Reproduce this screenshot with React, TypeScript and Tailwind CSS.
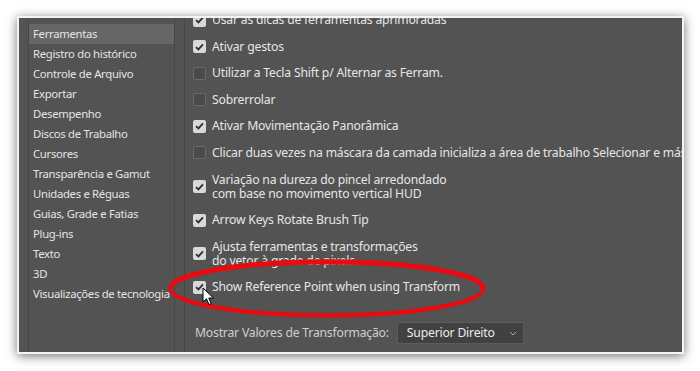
import React from 'react';

const CATEGORIES = [
  'Ferramentas',
  'Registro do histórico',
  'Controle de Arquivo',
  'Exportar',
  'Desempenho',
  'Discos de Trabalho',
  'Cursores',
  'Transparência e Gamut',
  'Unidades e Réguas',
  'Guias, Grade e Fatias',
  'Plug-ins',
  'Texto',
  '3D',
  'Visualizações de tecnologia',
];

type Option = { lines: string[]; checked: boolean };

const OPTIONS: Option[] = [
  { lines: ['Usar as dicas de ferramentas aprimoradas'], checked: true },
  { lines: ['Ativar gestos'], checked: true },
  { lines: ['Utilizar a Tecla Shift p/ Alternar as Ferram.'], checked: false },
  { lines: ['Sobrerrolar'], checked: false },
  { lines: ['Ativar Movimentação Panorâmica'], checked: true },
  {
    lines: ['Clicar duas vezes na máscara da camada inicializa a área de trabalho Selecionar e máscara'],
    checked: false,
  },
  {
    lines: ['Variação na dureza do pincel arredondado', 'com base no movimento vertical HUD'],
    checked: true,
  },
  { lines: ['Arrow Keys Rotate Brush Tip'], checked: true },
  { lines: ['Ajusta ferramentas e transformações', 'do vetor à grade de pixels'], checked: true },
  { lines: ['Show Reference Point when using Transform'], checked: true },
];

const Checkbox = ({ checked }: { checked: boolean }) =>
  checked ? (
    <span className="flex h-[13px] w-[13px] shrink-0 items-center justify-center rounded-[2px] bg-[#d9d9d9]">
      <svg width="9" height="8" viewBox="0 0 9 8">
        <path d="M1 4.2 L3.4 6.4 L8 1.4" fill="none" stroke="#2e2e2e" strokeWidth="1.8" />
      </svg>
    </span>
  ) : (
    <span className="h-[13px] w-[13px] shrink-0 rounded-[2px] border border-[#6a6a6a] bg-[#4a4a4a]" />
  );

export default function App() {
  return (
    <div className="h-[371px] w-[700px] overflow-hidden bg-white pl-[17px] pt-[16px] font-['Noto_Sans',sans-serif]">
      <div className="relative flex h-[338px] w-[667px] overflow-hidden border-2 border-[#f4f4f4] bg-[#535353] shadow-[0_2px_10px_rgba(0,0,0,0.55)]">
        {/* lista de categorias */}
        <div className="ml-[9px] w-[147px] shrink-0 border-x border-[#474747] pt-[6px]">
          {CATEGORIES.map((c, i) => (
            <div
              key={c}
              className={`flex h-[20px] items-center pl-[4px] text-[11.3px] tracking-[-0.3px] whitespace-nowrap text-[#e4e4e4] ${
                i === 0 ? 'bg-[#666666]' : ''
              }`}
            >
              {c}
            </div>
          ))}
        </div>

        {/* painel de opções */}
        <div className="ml-[9px] flex min-w-0 flex-1 flex-col border-l border-[#474747] pl-[8px]">
          <div className="-mt-[5px] flex flex-col gap-[12.6px]">
            {OPTIONS.map((o, i) => (
              <div key={i} className="flex items-center gap-[6px]">
                <Checkbox checked={o.checked} />
                <div className="text-[12.2px] leading-[14px] tracking-[-0.2px] whitespace-nowrap text-[#e6e6e6]">
                  {o.lines.map((l) => (
                    <div key={l}>{l}</div>
                  ))}
                </div>
              </div>
            ))}
          </div>

          <div className="mt-[28px] flex items-center gap-[8px] pl-[2px]">
            <span className="text-[12.2px] tracking-[-0.2px] text-[#cfcfcf]">Mostrar Valores de Transformação:</span>
            <div className="flex h-[22px] w-[127px] items-center justify-between border border-[#5c5c5c] bg-[#414141] pl-[9px] pr-[6px] text-[12.2px] tracking-[-0.2px] text-[#ececec]">
              <span>Superior Direito</span>
              <svg width="8" height="5" viewBox="0 0 8 5">
                <path d="M1 1 L4 4 L7 1" fill="none" stroke="#a8a8a8" strokeWidth="1" />
              </svg>
            </div>
          </div>
        </div>

        {/* marcação vermelha */}
        <svg className="pointer-events-none absolute left-0 top-0" width="667" height="338" viewBox="0 0 667 338">
          <ellipse cx="308" cy="270" rx="157" ry="27" fill="none" stroke="#ea0a12" strokeWidth="3.5" />
          <ellipse cx="308" cy="271.5" rx="156" ry="26.5" fill="none" stroke="#ea0a12" strokeWidth="3" />
        </svg>

        {/* cursor */}
        <svg className="pointer-events-none absolute left-[183px] top-[269px]" width="14" height="20" viewBox="0 0 14 20">
          <path
            d="M1 1 L1 15 L4.5 11.8 L7 17.5 L9.2 16.5 L6.8 11 L11.5 11 Z"
            fill="#fff"
            stroke="#000"
            strokeWidth="1"
            strokeLinejoin="round"
          />
        </svg>
      </div>
    </div>
  );
}
